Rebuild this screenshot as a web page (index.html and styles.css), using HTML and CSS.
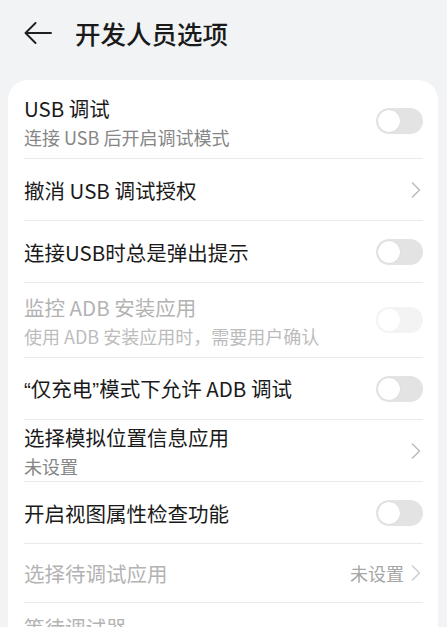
FILE: index.html
```html
<!DOCTYPE html>
<html lang="zh-CN">
<head>
<meta charset="utf-8">
<title>开发人员选项</title>
<link rel="stylesheet" href="styles.css">
</head>
<body>
<header class="topbar">
  <svg class="back" width="28" height="22" viewBox="0 0 28 22" aria-hidden="true">
    <path d="M1.5 11 H27 M11.5 1 L1.5 11 L11.5 21" fill="none" stroke="#1f1f1f" stroke-width="1.9" stroke-linecap="round" stroke-linejoin="round"/>
  </svg>
  <h1 class="title">开发人员选项</h1>
</header>
<main class="card">
  <div class="row two">
    <div class="text"><div class="label">USB 调试</div><div class="sub">连接 USB 后开启调试模式</div></div>
    <span class="switch"><span class="knob"></span></span>
  </div>
  <div class="row">
    <div class="text"><div class="label">撤消 USB 调试授权</div></div>
    <svg class="chev" width="10" height="16" viewBox="0 0 10 16"><path d="M1.5 1 L8.5 8 L1.5 15" fill="none" stroke="#bdbdbd" stroke-width="1.6" stroke-linecap="round" stroke-linejoin="round"/></svg>
  </div>
  <div class="row">
    <div class="text"><div class="label">连接USB时总是弹出提示</div></div>
    <span class="switch"><span class="knob"></span></span>
  </div>
  <div class="row two disabled">
    <div class="text"><div class="label">监控 ADB 安装应用</div><div class="sub">使用 ADB 安装应用时，需要用户确认</div></div>
    <span class="switch off"><span class="knob"></span></span>
  </div>
  <div class="row">
    <div class="text"><div class="label"><span class="q">“</span>仅充电<span class="q">”</span>模式下允许 ADB 调试</div></div>
    <span class="switch"><span class="knob"></span></span>
  </div>
  <div class="row tight">
    <div class="text"><div class="label">选择模拟位置信息应用</div><div class="sub">未设置</div></div>
    <svg class="chev" width="10" height="16" viewBox="0 0 10 16"><path d="M1.5 1 L8.5 8 L1.5 15" fill="none" stroke="#bdbdbd" stroke-width="1.6" stroke-linecap="round" stroke-linejoin="round"/></svg>
  </div>
  <div class="row">
    <div class="text"><div class="label">开启视图属性检查功能</div></div>
    <span class="switch"><span class="knob"></span></span>
  </div>
  <div class="row disabled short">
    <div class="text"><div class="label">选择待调试应用</div></div>
    <span class="value">未设置</span>
    <svg class="chev" width="10" height="16" viewBox="0 0 10 16"><path d="M1.5 1 L8.5 8 L1.5 15" fill="none" stroke="#d0d0d0" stroke-width="1.6" stroke-linecap="round" stroke-linejoin="round"/></svg>
  </div>
  <div class="row two disabled last">
    <div class="text"><div class="label">等待调试器</div><div class="sub">调试应用会在执行前等待附加调试器</div></div>
    <span class="switch off"><span class="knob"></span></span>
  </div>
</main>
</body>
</html>
```
FILE: styles.css
```css
* { box-sizing: border-box; }
html, body {
  margin: 0;
  padding: 0;
  background: #f1f3f5;
  font-family: "Noto Sans CJK SC", "Noto Sans", sans-serif;
  color: #1a1a1a;
  overflow: hidden;
  height: 627px;
}
.topbar {
  height: 66px;
  display: flex;
  align-items: center;
  padding-left: 24px;
}
.back { display: block; flex: none; }
.title {
  margin: 0 0 0 23px;
  font-size: 25.5px;
  font-weight: 500;
  line-height: 34px;
  color: #1a1a1a;
}
.card {
  margin: 14px 9px 0 8px;
  background: #ffffff;
  border-radius: 20px;
  padding: 4px 15px 0 16px;
}
.row {
  height: 62px;
  display: flex;
  align-items: center;
  border-bottom: 1px solid #e9e9e9;
}
.row.two { height: 75px; }
.row.short { height: 59px; }
.row.last { border-bottom: none; }
.text {
  flex: 1;
  display: flex;
  flex-direction: column;
  gap: 3px;
  min-width: 0;
}
.label {
  font-size: 20.5px;
  line-height: 28px;
  color: #1a1a1a;
  white-space: nowrap;
}
.q { font-family: "Liberation Sans", "Noto Sans", sans-serif; }
.sub {
  font-size: 18px;
  line-height: 24px;
  color: #868686;
  white-space: nowrap;
}
.disabled .label { color: #b3b3b3; }
.disabled .sub { color: #bcbcbc; }
.switch {
  flex: none;
  width: 47px;
  height: 26px;
  border-radius: 13px;
  background: #e3e3e3;
  padding: 2px;
  display: flex;
  align-items: center;
}
.knob {
  width: 22px;
  height: 22px;
  border-radius: 50%;
  background: #ffffff;
  box-shadow: 0 0 1px rgba(0,0,0,0.15);
}
.switch.off { background: #f3f3f3; }
.switch.off .knob { box-shadow: none; }
.chev { flex: none; display: block; margin-right: 2px; }
.value {
  font-size: 18px;
  line-height: 24px;
  color: #a6a6a6;
  margin-right: 7px;
}
```
